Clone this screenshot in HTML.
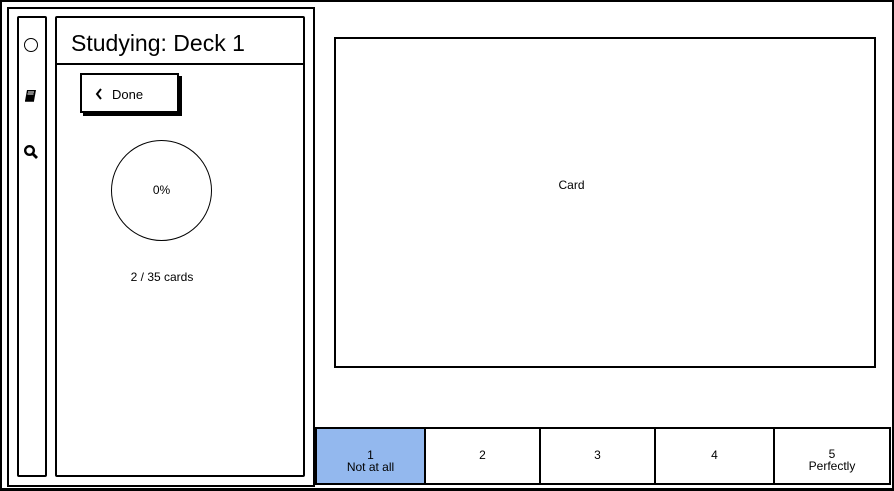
<!DOCTYPE html>
<html><head><style>
*{box-sizing:border-box;margin:0;padding:0}
body{width:894px;height:491px;background:#fff;position:relative;overflow:hidden;font-family:"Liberation Sans",sans-serif;color:#000}
.a{position:absolute}
.b{border:2px solid #000}
.t{font-size:12px;text-align:center}
</style></head><body>
<div class="a b" style="left:0;top:0;width:894px;height:491px;border-width:2px 2px 3px 2px"></div>
<div class="a b" style="left:7px;top:7px;width:308px;height:480px"></div>
<div class="a b" style="left:17px;top:16px;width:30px;height:461px;border-radius:2px"></div>
<div class="a" style="left:24px;top:38px;width:14px;height:14px;border:1.5px solid #000;border-radius:50%"></div>
<svg class="a" style="left:23px;top:88px" width="16" height="16" viewBox="0 0 16 16"><path d="M4 2h9l-2 11H2z" fill="#000"/><path d="M5 4h6M4.5 6h6" stroke="#fff" stroke-width="1"/><path d="M2 13h9" stroke="#000" stroke-width="1.5"/></svg>
<svg class="a" style="left:23px;top:144px" width="16" height="16" viewBox="0 0 16 16"><circle cx="6.5" cy="6.5" r="4.3" stroke="#000" stroke-width="2.4" fill="none"/><path d="M9.5 9.5l4.5 4.5" stroke="#000" stroke-width="2.8"/></svg>
<div class="a b" style="left:55px;top:16px;width:250px;height:461px;border-radius:2px"></div>
<div class="a" style="left:56px;top:63px;width:248px;height:2px;background:#000"></div>
<div class="a" style="left:71px;top:30px;font-size:23px">Studying: Deck 1</div>
<div class="a" style="left:83px;top:76px;width:99px;height:40px;background:#000"></div>
<div class="a b" style="left:80px;top:73px;width:99px;height:40px;background:#fff"></div>
<svg class="a" style="left:94px;top:87px" width="10" height="14" viewBox="0 0 10 14"><path d="M7 2L3 7l4 5" stroke="#000" stroke-width="2" fill="none"/></svg>
<div class="a" style="left:112px;top:87px;font-size:13px">Done</div>
<div class="a" style="left:111px;top:140px;width:101px;height:101px;border:1.5px solid #000;border-radius:50%"></div>
<div class="a t" style="left:111px;top:183px;width:101px">0%</div>
<div class="a t" style="left:110px;top:270px;width:104px">2 / 35 cards</div>
<div class="a b" style="left:334px;top:37px;width:542px;height:331px"></div>
<div class="a t" style="left:534px;top:178px;width:75px">Card</div>
<div class="a b" style="left:315px;top:427px;width:576px;height:58px"></div>
<div class="a" style="left:317px;top:429px;width:107px;height:54px;background:#93b8ee"></div>
<div class="a" style="left:424px;top:428px;width:2px;height:56px;background:#000"></div>
<div class="a" style="left:539px;top:428px;width:2px;height:56px;background:#000"></div>
<div class="a" style="left:654px;top:428px;width:2px;height:56px;background:#000"></div>
<div class="a" style="left:773px;top:428px;width:2px;height:56px;background:#000"></div>
<div class="a t" style="left:317px;top:449px;width:107px;line-height:12px">1<br>Not at all</div>
<div class="a t" style="left:426px;top:448px;width:113px">2</div>
<div class="a t" style="left:541px;top:448px;width:113px">3</div>
<div class="a t" style="left:656px;top:448px;width:117px">4</div>
<div class="a t" style="left:775px;top:448px;width:114px;line-height:12px">5<br>Perfectly</div>
</body></html>
